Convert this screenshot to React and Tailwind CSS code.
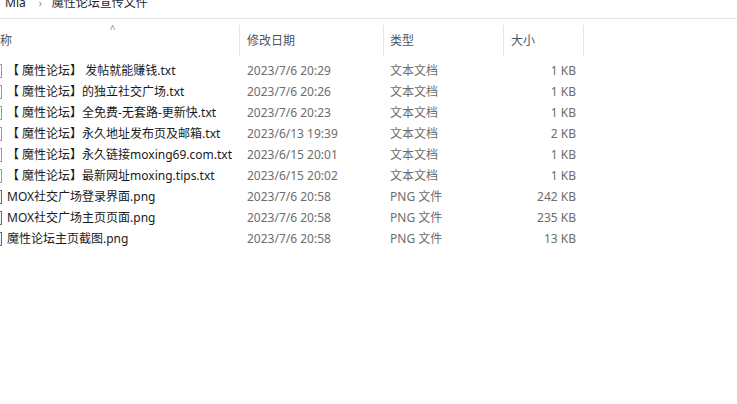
import React from 'react';

const files = [
  { name: '【 魔性论坛】 发帖就能赚钱.txt', date: '2023/7/6 20:29', type: '文本文档', size: '1 KB', kind: 'txt' },
  { name: '【 魔性论坛】的独立社交广场.txt', date: '2023/7/6 20:26', type: '文本文档', size: '1 KB', kind: 'txt' },
  { name: '【 魔性论坛】全免费-无套路-更新快.txt', date: '2023/7/6 20:23', type: '文本文档', size: '1 KB', kind: 'txt' },
  { name: '【 魔性论坛】永久地址发布页及邮箱.txt', date: '2023/6/13 19:39', type: '文本文档', size: '2 KB', kind: 'txt' },
  { name: '【 魔性论坛】永久链接moxing69.com.txt', date: '2023/6/15 20:01', type: '文本文档', size: '1 KB', kind: 'txt' },
  { name: '【 魔性论坛】最新网址moxing.tips.txt', date: '2023/6/15 20:02', type: '文本文档', size: '1 KB', kind: 'txt' },
  { name: 'MOX社交广场登录界面.png', date: '2023/7/6 20:58', type: 'PNG 文件', size: '242 KB', kind: 'png' },
  { name: 'MOX社交广场主页页面.png', date: '2023/7/6 20:58', type: 'PNG 文件', size: '235 KB', kind: 'png' },
  { name: '魔性论坛主页截图.png', date: '2023/7/6 20:58', type: 'PNG 文件', size: '13 KB', kind: 'png' },
];

const font = { fontFamily: '"Segoe UI", "Noto Sans", "Noto Sans CJK SC", sans-serif' };

function FileIcon({ kind }) {
  if (kind === 'png') {
    return (
      <svg width="16" height="16" viewBox="0 0 16 16" className="shrink-0">
        <rect x="2.5" y="1.5" width="12" height="13" fill="#f4f4f4" stroke="#6b6b6b" />
      </svg>
    );
  }
  return (
    <svg width="16" height="16" viewBox="0 0 16 16" className="shrink-0">
      <rect x="2.5" y="1.5" width="12" height="13" fill="#ffffff" stroke="#9a9a9a" />
    </svg>
  );
}

function HeaderCell({ children, className = '' }) {
  return (
    <div className={`flex h-[31px] items-center border-r border-[#e5e5e5] ${className}`}>
      {children}
    </div>
  );
}

export default function App() {
  return (
    <div className="h-[404px] w-[737px] overflow-hidden bg-white text-[12px]" style={font}>
      <div className="flex h-[19px] items-start border-b border-[#e5e5e5]">
        <div className="-mt-[6px] flex items-center leading-[18px] text-[#1e1e1e]">
          <span className="ml-[5px]">Mia</span>
          <span className="ml-[13px] text-[10px] text-[#8a8a8a]">›</span>
          <span className="ml-[10px]">魔性论坛宣传文件</span>
        </div>
      </div>

      <div className="-ml-[14px]">
        <div className="mt-[6px] grid grid-cols-[254px_144px_120px_80px] text-[#4c5665]">
          <HeaderCell className="relative pl-[2px]">
            <span className="absolute left-1/2 top-[-3px] -translate-x-1/2 text-[10px] text-[#8a8a8a]">^</span>
            名称
          </HeaderCell>
          <HeaderCell className="pl-[7px]">修改日期</HeaderCell>
          <HeaderCell className="pl-[6px]">类型</HeaderCell>
          <HeaderCell className="pl-[7px]">大小</HeaderCell>
        </div>

        <div className="mt-[4px]">
          {files.map((f) => (
            <div key={f.name} className="grid h-[21px] grid-cols-[254px_144px_120px_80px] items-center">
              <div className="flex items-center gap-[4px] pl-[1px] text-[#1a1a1a]">
                <FileIcon kind={f.kind} />
                <span className="whitespace-nowrap">{f.name}</span>
              </div>
              <div className="pl-[7px] text-[#6d6d6d]">{f.date}</div>
              <div className="pl-[6px] text-[#6d6d6d]">{f.type}</div>
              <div className="pr-[8px] text-right text-[#6d6d6d]">{f.size}</div>
            </div>
          ))}
        </div>
      </div>
    </div>
  );
}
